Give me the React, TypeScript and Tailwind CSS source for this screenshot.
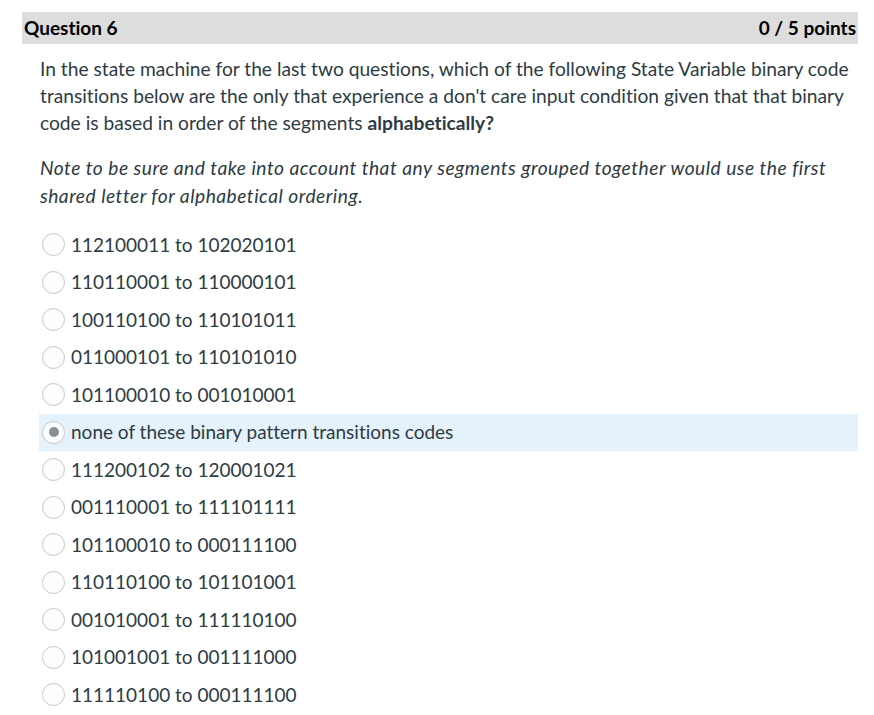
import React from "react";

const answers = [
  "112100011 to 102020101",
  "110110001 to 110000101",
  "100110100 to 110101011",
  "011000101 to 110101010",
  "101100010 to 001010001",
  "none of these binary pattern transitions codes",
  "111200102 to 120001021",
  "001110001 to 111101111",
  "101100010 to 000111100",
  "110110100 to 101101001",
  "001010001 to 111110100",
  "101001001 to 001111000",
  "111110100 to 000111100",
];

export default function App() {
  return (
    <div
      className="w-[874px] h-[715px] overflow-hidden bg-white text-[#2d3b45] [font-variant-ligatures:none]"
      style={{ fontFamily: "Lato, 'Noto Sans', sans-serif" }}
    >
      <div className="pt-[12px] pl-[22px] pr-[16px]">
        <div className="flex h-[32px] items-center justify-between bg-[#dddddd] pl-[2px] pr-[2px] text-[19px] font-bold text-black">
          <span>Question 6</span>
          <span>0 / 5 points</span>
        </div>
        <div className="pl-[18px] pr-[4px]">
          <p className="mt-[11px] text-[19.2px] leading-[27px]">
            In the state machine for the last two questions, which of the following State Variable binary code transitions below are the only that experience a don't care input condition given that that binary code is based in order of the segments <b>alphabetically?</b>
          </p>
          <p className="mt-[18px] text-[19.2px] italic leading-[27.5px] tracking-[0.5px]">
            Note to be sure and take into account that any segments grouped together would use the first
            <br />
            shared letter for alphabetical ordering.
          </p>
        </div>
        <div className="mt-[17px] pl-[17px]">
          {answers.map((a, i) => {
            const sel = i === 5;
            return (
              <div
                key={i}
                className={`flex h-[37.5px] items-center pl-[3px] ${sel ? "bg-[#e5f1fb]" : ""}`}
              >
                <span className="flex h-[23px] w-[23px] shrink-0 items-center justify-center rounded-full border border-[#c4c8cb] bg-[#fcfdfe]">
                  {sel && <span className="h-[10px] w-[10px] rounded-full bg-[#8a8f94]" />}
                </span>
                <span className="ml-[6px] text-[19px]">{a}</span>
              </div>
            );
          })}
        </div>
      </div>
    </div>
  );
}
